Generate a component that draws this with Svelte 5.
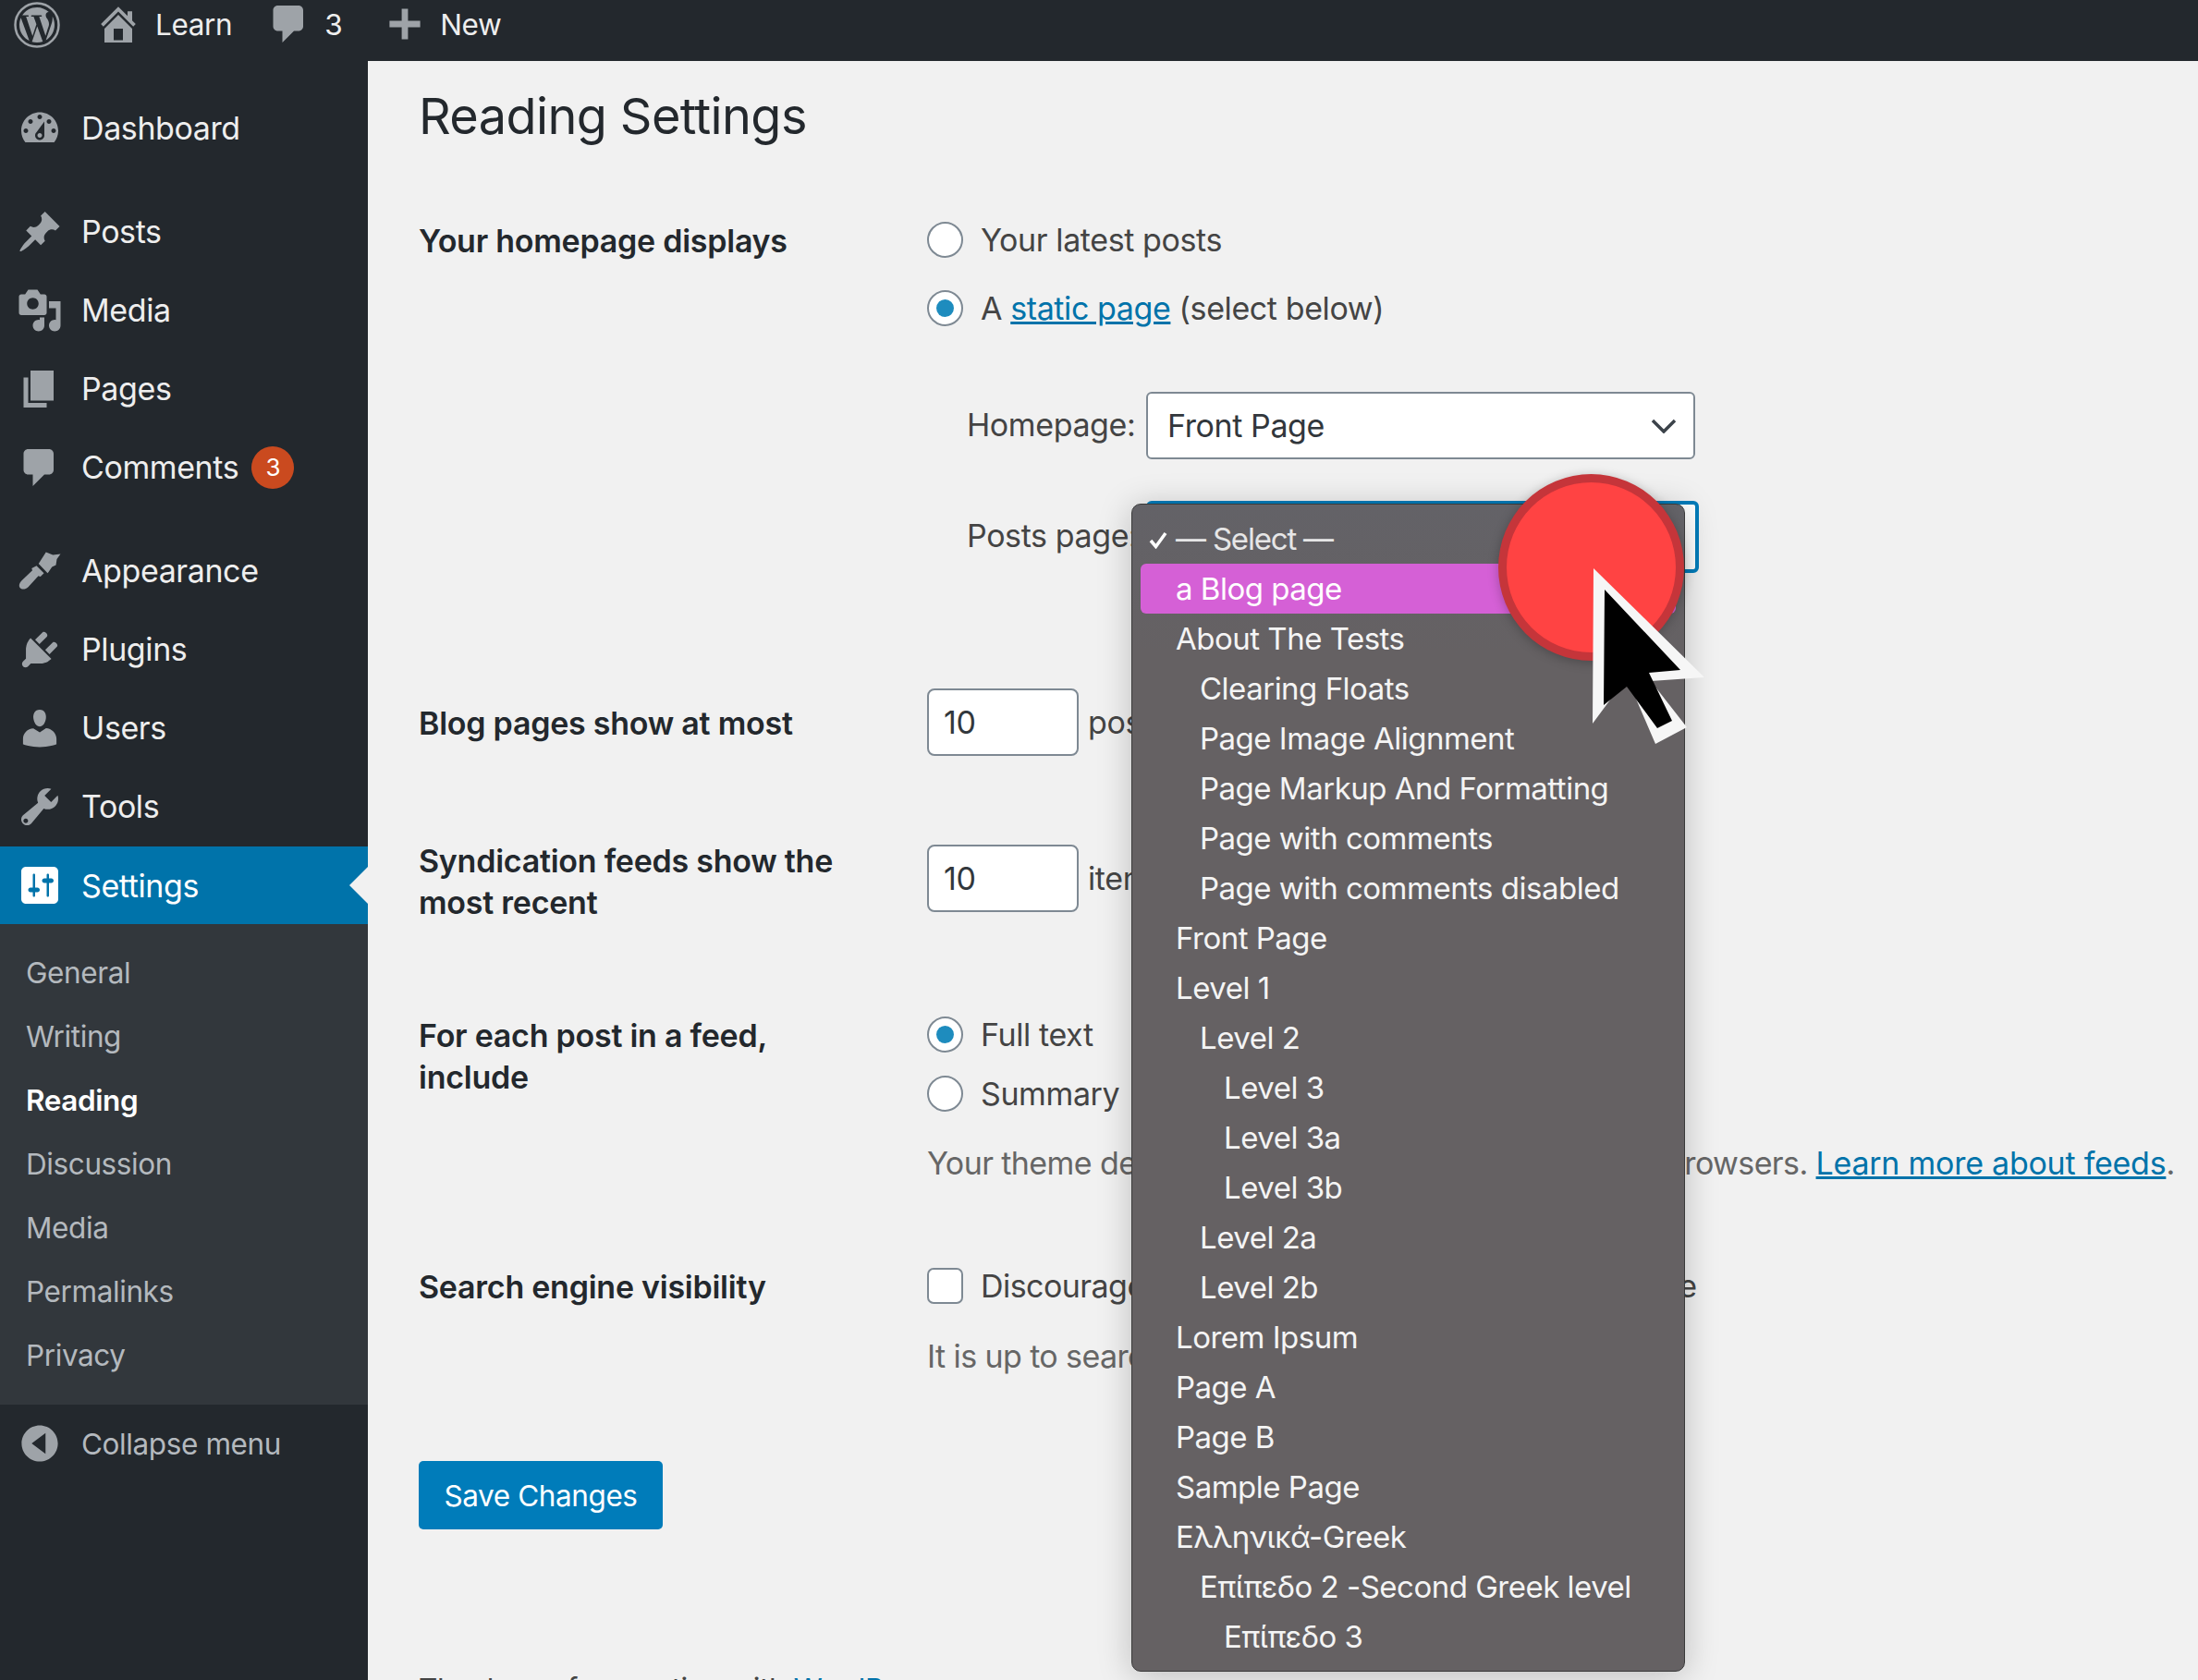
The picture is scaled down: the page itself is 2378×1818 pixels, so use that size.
<script>
	const paths = {
		dash: 'M3.76 16h12.48c1.1-1.37 1.76-3.11 1.76-5 0-4.42-3.58-8-8-8s-8 3.58-8 8c0 1.89.66 3.63 1.76 5zM10 4c.55 0 1 .45 1 1s-.45 1-1 1-1-.45-1-1 .45-1 1-1zM6 6c.55 0 1 .45 1 1s-.45 1-1 1-1-.45-1-1 .45-1 1-1zm8 0c.55 0 1 .45 1 1s-.45 1-1 1-1-.45-1-1 .45-1 1-1zm-5.37 5.55L12 7v6c0 1.1-.9 2-2 2s-2-.9-2-2c0-.57.24-1.08.63-1.45zM4 10c.55 0 1 .45 1 1s-.45 1-1 1-1-.45-1-1 .45-1 1-1zm12 0c.55 0 1 .45 1 1s-.45 1-1 1-1-.45-1-1 .45-1 1-1zm-5 3c0-.55-.45-1-1-1s-1 .45-1 1 .45 1 1 1 1-.45 1-1z',
		pin: 'M10.44 3.02l1.82-1.82 6.36 6.35-1.83 1.82c-1.05-.68-2.48-.57-3.41.36l-.75.75c-.92.93-1.04 2.35-.35 3.41l-1.83 1.82-2.41-2.41-2.8 2.79c-.42.42-3.38 2.71-3.8 2.29s1.86-3.39 2.28-3.81l2.79-2.79L4.1 9.36l1.83-1.82c1.05.69 2.48.57 3.4-.36l.75-.75c.93-.92 1.05-2.35.36-3.41z',
		media: 'M13 11V4c0-.55-.45-1-1-1h-1.67L9 1H5L3.67 3H2c-.55 0-1 .45-1 1v7c0 .55.45 1 1 1h10c.55 0 1-.45 1-1zM7 4.5c1.38 0 2.5 1.12 2.5 2.5S8.38 9.5 7 9.5 4.5 8.38 4.5 7 5.62 4.5 7 4.5zM14 6h5v10.5c0 1.38-1.12 2.5-2.5 2.5S14 17.88 14 16.5s1.12-2.5 2.5-2.5c.17 0 .34.02.5.05V9h-3V6zm-4 8.05V13h2v3.5c0 1.38-1.12 2.5-2.5 2.5S7 17.88 7 16.5 8.12 14 9.5 14c.17 0 .34.02.5.05z',
		pages: 'M6 15V2h10v13H6zm-1 1h8v2H3V5h2v11z',
		bubble: 'M5 2h9c1.1 0 2 .9 2 2v7c0 1.1-.9 2-2 2h-2l-5 5v-5H5c-1.1 0-2-.9-2-2V4c0-1.1.9-2 2-2z',
		brush: 'M8.6 7.7l3.2 3.2-1.5 1.5-.9-.3-4.4 4.8c-1 1-2.7 1.3-3.5.4-.8-.9-.2-2.3.8-3.3l4.5-4.3-.3-.9zM9.5 6.8l3.2-5 3 1.2 3.3-.4-1.6 2.2-.4 2.6-1.7.8-1.5 2.2-.4.5z',
		plug: 'M13.11 4.36L9.87 7.6 8 5.73l3.24-3.24c.35-.34 1.05-.2 1.56.32.52.51.66 1.21.31 1.55zm-8 1.77l.91-1.12 9.01 9.01-1.19.84c-.71.71-2.63 1.16-3.82 1.16H6.14L4.9 17.26c-.59.59-1.54.59-2.12 0-.59-.58-.59-1.53 0-2.12l1.24-1.24v-3.88c0-1.13.4-3.05 1.11-3.76zm7.26 3.97l3.24-3.24c.34-.35 1.04-.21 1.55.31.52.51.66 1.21.31 1.55l-3.24 3.25z',
		user: 'M10 9.25c-2.27 0-2.73-3.44-2.73-3.44C7 4.02 7.82 2 9.97 2c2.16 0 2.98 2.02 2.71 3.81 0 0-.41 3.44-2.68 3.44zm0 2.57L12.72 10c2.39 0 4.52 2.33 4.52 4.53v2.49s-3.65 1.13-7.24 1.13c-3.65 0-7.24-1.13-7.24-1.13v-2.49c0-2.25 1.94-4.48 4.47-4.48z',
		wrench: 'M16.68 9.77c-1.34 1.34-3.3 1.67-4.95.99l-5.41 6.52c-.99.99-2.59.99-3.57 0-.99-.98-.99-2.58 0-3.57l6.52-5.42c-.68-1.65-.35-3.61.99-4.95 1.28-1.28 3.12-1.62 4.72-1.06l-2.89 2.89 2.82 2.82 2.86-2.87c.53 1.58.18 3.41-1.09 4.67zM4.66 15.4c-.39-.39-1.03-.39-1.42 0-.39.39-.39 1.03 0 1.42.39.39 1.03.39 1.42 0 .39-.39.39-1.03 0-1.42z',
		settings: 'M18 16V4c0-1.1-.9-2-2-2H4c-1.1 0-2 .9-2 2v12c0 1.1.9 2 2 2h12c1.1 0 2-.9 2-2zM8 11h1c.55 0 1 .45 1 1s-.45 1-1 1H8v1.5c0 .28-.22.5-.5.5s-.5-.22-.5-.5V13H6c-.55 0-1-.45-1-1s.45-1 1-1h1V5.5c0-.28.22-.5.5-.5s.5.22.5.5V11zm5-2h-1c-.55 0-1-.45-1-1s.45-1 1-1h1V5.5c0-.28.22-.5.5-.5s.5.22.5.5V7h1c.55 0 1 .45 1 1s-.45 1-1 1h-1v5.5c0 .28-.22.5-.5.5s-.5-.22-.5-.5V9z',
		home: 'M16 8.5l1.53 1.53-1.06 1.06L10 4.62l-6.47 6.47-1.06-1.06L10 2.5l4 4v-2h2v4zm-6-2.46l6 5.99V18H4v-5.97zM12 17v-5H8v5h4z',
		plus: 'M11.7 1.7v6.6h6.6v3.4h-6.6v6.6H8.3v-6.6H1.7V8.3h6.6V1.7z',
		collapse: 'M10 2.16c4.33 0 7.84 3.51 7.84 7.84s-3.51 7.84-7.84 7.84S2.16 14.33 2.16 10 5.67 2.16 10 2.16zM12.5 14.5v-9L6.5 10z'
	};
	const adminTop = [
		{ label: 'Dashboard', icon: 'dash' },
		{ label: 'Posts', icon: 'pin', cls: 'sep' },
		{ label: 'Media', icon: 'media' },
		{ label: 'Pages', icon: 'pages' },
		{ label: 'Comments', icon: 'bubble', badge: '3' },
		{ label: 'Appearance', icon: 'brush', cls: 'sep' },
		{ label: 'Plugins', icon: 'plug' },
		{ label: 'Users', icon: 'user' },
		{ label: 'Tools', icon: 'wrench' }
	];
	const submenu = ['General', 'Writing', 'Reading', 'Discussion', 'Media', 'Permalinks', 'Privacy'];
	const pages = [
		['a Blog page', 0, 'hot'],
		['About The Tests', 0],
		['Clearing Floats', 1],
		['Page Image Alignment', 1],
		['Page Markup And Formatting', 1],
		['Page with comments', 1],
		['Page with comments disabled', 1],
		['Front Page', 0],
		['Level 1', 0],
		['Level 2', 1],
		['Level 3', 2],
		['Level 3a', 2],
		['Level 3b', 2],
		['Level 2a', 1],
		['Level 2b', 1],
		['Lorem Ipsum', 0],
		['Page A', 0],
		['Page B', 0],
		['Sample Page', 0],
		['Ελληνικά-Greek', 0],
		['Επίπεδο 2 -Second Greek level', 1],
		['Επίπεδο 3', 2]
	];
</script>

<div class="page">
	<header class="topbar">
		<svg class="wp" viewBox="0 0 50 50">
			<circle cx="25" cy="25" r="23.5" fill="none" stroke="#9ea3a8" stroke-width="2.5"></circle>
			<path fill="#9ea3a8" d="M6 25c0 7.5 4.4 14 10.7 17L7.6 17.3C6.6 19.5 6 22.2 6 25zm32-1c0-2.4-.9-4-1.6-5.2-1-1.5-1.9-2.9-1.9-4.4 0-1.7 1.3-3.3 3.1-3.3h.2C34.5 8 30 6 25 6c-6.6 0-12.5 3.4-15.9 8.6h1.2c2 0 5-.2 5-.2 1-.1 1.1 1.4.1 1.5 0 0-1 .1-2.2.2l7 20.8 4.2-12.6-3-8.2c-1-.1-2-.2-2-.2-1-.1-.9-1.6.1-1.5 0 0 3.1.2 5 .2 2 0 5-.2 5-.2 1-.1 1.1 1.4.1 1.5 0 0-1 .1-2.2.2l6.9 20.7 2-6.5c.8-2.5 1.7-4.4 1.7-6.1zM25.3 26.6l-5.7 16.7c1.7.5 3.5.8 5.4.8 2.2 0 4.4-.4 6.3-1.1l-.1-.3zm16.4-10.8c.1.6.1 1.3.1 2 0 2-.4 4.2-1.4 7l-5.8 16.8C40.2 38.3 44 32.1 44 25c0-3.3-.8-6.5-2.3-9.2z"></path>
		</svg>
		<span class="bar-item home">
			<svg viewBox="0 0 20 20"><path fill-rule="evenodd" d={paths.home}></path></svg>
			Learn
		</span>
		<span class="bar-item comments">
			<svg viewBox="0 0 20 20"><path d={paths.bubble}></path></svg>
			3
		</span>
		<span class="bar-item plus">
			<svg viewBox="0 0 20 20"><path d={paths.plus}></path></svg>
			New
		</span>
	</header>

	<div class="shell">
		<nav class="sidebar">
			{#each adminTop as item}
				<div class="menu-item {item.cls ?? ''}">
					<svg viewBox="0 0 20 20"><path fill-rule="evenodd" d={paths[item.icon]}></path></svg>
					<span>{item.label}</span>
					{#if item.badge}<b class="badge">{item.badge}</b>{/if}
				</div>
			{/each}
			<div class="menu-item current">
				<svg viewBox="0 0 20 20"><path fill-rule="evenodd" d={paths.settings}></path></svg>
				<span>Settings</span>
			</div>
			<ul class="submenu">
				{#each submenu as link}
					<li class:active={link === 'Reading'}>{link}</li>
				{/each}
			</ul>
			<div class="collapse">
				<svg viewBox="0 0 20 20"><path fill-rule="evenodd" d={paths.collapse}></path></svg>
				<span>Collapse menu</span>
			</div>
		</nav>

		<main class="content">
			<h1>Reading Settings</h1>

			<div class="row homepage">
				<div class="label">Your homepage displays</div>
				<div class="field">
					<label class="opt"><i class="radio"></i>Your latest posts</label>
					<label class="opt second"><i class="radio on"></i>A&nbsp;<a href="#top">static page</a>&nbsp;(select below)</label>
					<div class="select-line first">
						<span class="select-label">Homepage:</span>
						<div class="select">Front Page
							<svg viewBox="0 0 28 16"><path d="M2 2l12 12L26 2" fill="none" stroke="#3c434a" stroke-width="3.5"></path></svg>
						</div>
					</div>
					<div class="select-line posts">
						<span class="select-label">Posts page:</span>
						<div class="select focused"></div>
					</div>
				</div>
			</div>

			<div class="row blog">
				<div class="label">Blog pages show at most</div>
				<div class="field inline"><div class="num">10</div><span>posts</span></div>
			</div>

			<div class="row feeds">
				<div class="label">Syndication feeds show the most recent</div>
				<div class="field inline"><div class="num">10</div><span>items</span></div>
			</div>

			<div class="row each">
				<div class="label">For each post in a feed, include</div>
				<div class="field">
					<label class="opt"><i class="radio on"></i>Full text</label>
					<label class="opt summary"><i class="radio"></i>Summary</label>
					<p class="desc">Your theme determines how content is displayed in browsers. <a href="#top">Learn more about feeds</a>.</p>
				</div>
			</div>

			<div class="row search">
				<div class="label">Search engine visibility</div>
				<div class="field">
					<label class="opt discourage"><i class="check"></i>Discourage search engines from indexing this site</label>
					<p class="desc up">It is up to search engines to honor this request.</p>
				</div>
			</div>

			<button class="save">Save Changes</button>
			<p class="footer">Thank you for creating with <a href="#top">WordPress</a>.</p>
		</main>
	</div>

	<div class="popup">
		<div class="popup-row selected">
			<svg class="tick" viewBox="0 0 20 19"><path d="M2 10l5.5 6.5L18 2" fill="none" stroke="#fff" stroke-width="3.5"></path></svg>
			— Select —
		</div>
		{#each pages as [title, depth, cls]}
			<div class="popup-row {cls ?? ''}" style="padding-left: {38 + depth * 26}px">{title}</div>
		{/each}
	</div>

	<div class="click"></div>
	<svg class="cursor" viewBox="0 0 130 200">
		<polygon points="4,5 124,123 66,127 105,177 71,195 40,123 3,173" fill="#f6f6f6"></polygon>
		<polygon points="16,28 98,115 64,118 89,170 73,178 40,133 15,153" fill="#000"></polygon>
	</svg>
</div>

<style>
	:global(body) {
		margin: 0;
		background: #f1f1f1;
	}

	.page {
		position: relative;
		width: 2378px;
		height: 1818px;
		overflow: hidden;
		font-family: Inter, "Liberation Sans", sans-serif;
		font-size: 34px;
		letter-spacing: -0.4px;
		color: #444;
		background: #f1f1f1;
	}

	/* top bar */
	.topbar {
		display: flex;
		align-items: center;
		height: 66px;
		padding: 0 0 14px 15px;
		box-sizing: border-box;
		background: #23282d;
		color: #eee;
		font-size: 31.5px;
	}

	.topbar .wp {
		width: 50px;
		height: 50px;
		margin-top: 2px;
	}

	.bar-item {
		display: flex;
		align-items: center;
	}

	.bar-item svg {
		flex: none;
		width: 50px;
		height: 50px;
		fill: #9ea3a8;
	}

	.home {
		margin-left: 38px;
		gap: 15px;
	}

	.comments {
		margin-left: 37px;
		gap: 13px;
	}

	.plus {
		margin-left: 48px;
		gap: 18px;
	}

	.plus svg {
		width: 40px;
		height: 40px;
	}

	.shell {
		display: flex;
		height: 1752px;
	}

	/* admin menu */
	.sidebar {
		flex: 0 0 398px;
		background: #23282d;
		color: #eee;
		padding-top: 30px;
		box-sizing: border-box;
	}

	.menu-item {
		display: flex;
		align-items: center;
		height: 85px;
		padding-left: 18px;
		position: relative;
	}

	.menu-item.sep {
		margin-top: 27px;
	}

	.menu-item svg,
	.collapse svg {
		flex: none;
		width: 50px;
		height: 50px;
		fill: #9ea3a8;
		margin-right: 20px;
	}

	.badge {
		margin-left: 14px;
		width: 46px;
		height: 46px;
		border-radius: 50%;
		background: #ca4a1f;
		color: #fff;
		font-size: 26px;
		font-weight: 400;
		display: flex;
		align-items: center;
		justify-content: center;
	}

	.current {
		height: 84px;
		margin-top: 1px;
		background: #0073aa;
		color: #fff;
	}

	.current svg {
		fill: #fff;
	}

	.current::after {
		content: '';
		position: absolute;
		right: 0;
		top: 22px;
		border: 20px solid transparent;
		border-right-color: #f1f1f1;
		border-left: 0;
	}

	.submenu {
		list-style: none;
		margin: 0;
		padding: 18px 0 19px 28px;
		background: #32373c;
		color: #b4b9be;
		font-size: 31.5px;
	}

	.submenu li {
		height: 69px;
		line-height: 69px;
	}

	.submenu .active {
		color: #fff;
		font-weight: 600;
	}

	.collapse {
		display: flex;
		align-items: center;
		height: 84px;
		padding-left: 18px;
		color: #b4b9be;
		font-size: 31.5px;
	}

	/* form */
	.content {
		flex: 1;
		padding: 25px 0 0 55px;
		min-width: 0;
	}

	h1 {
		margin: 0;
		font-size: 54px;
		font-weight: 400;
		color: #23282d;
		line-height: 70px;
		letter-spacing: -0.6px;
	}

	.row {
		display: flex;
	}

	.label {
		flex: 0 0 460px;
		margin-right: 90px;
		padding-top: 1px;
		font-weight: 600;
		color: #23282d;
		line-height: 45px;
		letter-spacing: -0.25px;
	}

	.field {
		flex: 1;
		min-width: 0;
	}

	.homepage {
		margin-top: 76px;
	}

	.opt {
		display: flex;
		align-items: center;
		height: 44px;
		white-space: nowrap;
	}

	.second {
		margin-top: 30px;
	}

	.summary {
		margin-top: 20px;
	}

	.discourage {
		letter-spacing: -0.55px;
	}

	.radio,
	.check {
		flex: none;
		width: 39px;
		height: 39px;
		box-sizing: border-box;
		margin-right: 19px;
		border: 2px solid #7e8993;
		border-radius: 50%;
		background: #fff;
		position: relative;
	}

	.check {
		border-radius: 7px;
	}

	.radio.on::after {
		content: '';
		position: absolute;
		inset: 8px;
		border-radius: 50%;
		background: #1e8cbe;
	}

	a {
		color: #0073aa;
	}

	.select-line {
		display: flex;
		align-items: center;
		margin-left: 43px;
	}

	.select-line.first {
		margin-top: 69px;
	}

	.select-line.posts {
		margin-top: 45px;
	}

	.select-label {
		flex: 0 0 194px;
		white-space: nowrap;
		padding-bottom: 2px;
	}

	.posts .select-label {
		padding-bottom: 4px;
	}

	.select {
		flex: none;
		display: flex;
		align-items: center;
		justify-content: space-between;
		width: 594px;
		height: 73px;
		padding: 0 18px 0 21px;
		box-sizing: border-box;
		border: 2px solid #7e8993;
		border-radius: 6px;
		background: #fff;
		color: #32373c;
	}

	.select svg {
		width: 28px;
		height: 16px;
	}

	.focused {
		width: 598px;
		height: 78px;
		border: 4px solid #007cba;
	}

	.blog {
		margin-top: 125px;
		align-items: center;
	}

	.feeds {
		margin-top: 90px;
	}

	.feeds .field {
		margin-top: 6px;
		align-self: flex-start;
	}

	.inline {
		display: flex;
		align-items: center;
		gap: 10px;
	}

	.num {
		width: 164px;
		height: 73px;
		box-sizing: border-box;
		padding-left: 16px;
		display: flex;
		align-items: center;
		background: #fff;
		border: 2px solid #7e8993;
		border-radius: 8px;
		color: #32373c;
	}

	.each {
		margin-top: 98px;
	}

	.desc {
		margin: 31px 0 0;
		line-height: 46px;
		white-space: nowrap;
		color: #666;
		letter-spacing: -0.6px;
	}

	.desc a {
		letter-spacing: -0.25px;
	}

	.search {
		margin-top: 87px;
	}

	.up {
		margin-top: 32px;
	}

	.save {
		display: block;
		margin-top: 90px;
		width: 264px;
		height: 74px;
		border: 0;
		border-radius: 5px;
		background: #007cba;
		color: #fff;
		font: inherit;
		font-size: 31.5px;
		letter-spacing: inherit;
	}

	.footer {
		margin: 150px 0 0;
		line-height: 46px;
		font-size: 31.5px;
	}

	/* native select popup */
	.popup {
		position: absolute;
		left: 1224px;
		top: 545px;
		width: 599px;
		height: 1264px;
		box-sizing: border-box;
		padding: 10px 9px;
		border: 1px solid #3a3a3a;
		border-radius: 10px;
		background: linear-gradient(#636267, #656163 160px);
		box-shadow: 0 4px 36px rgba(0, 0, 0, 0.22);
		color: #f4f4f4;
		font-size: 33px;
		letter-spacing: -0.5px;
	}

	.popup-row {
		height: 54px;
		line-height: 55px;
		white-space: nowrap;
		border-radius: 6px;
		position: relative;
	}

	.selected {
		padding-left: 38px;
		color: #e6e6e6;
		letter-spacing: -1.2px;
	}

	.tick {
		position: absolute;
		left: 9px;
		top: 19px;
		width: 20px;
		height: 19px;
	}

	.hot {
		background: #d560d6;
		color: #fff;
	}

	/* click marker and pointer */
	.click {
		position: absolute;
		left: 1621px;
		top: 513px;
		width: 201px;
		height: 202px;
		box-sizing: border-box;
		border-radius: 50%;
		background: #ff4343;
		border: 9px solid #c5353a;
		box-shadow: 0 2px 12px rgba(0, 0, 0, 0.25);
	}

	.cursor {
		position: absolute;
		left: 1720px;
		top: 610px;
		width: 130px;
		height: 200px;
	}
</style>
